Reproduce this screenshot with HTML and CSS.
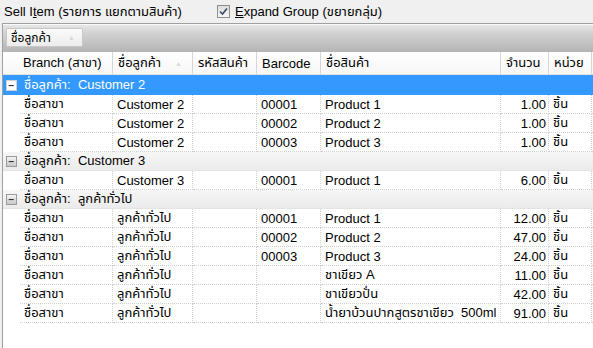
FILE: index.html
```html
<!DOCTYPE html>
<html>
<head>
<meta charset="utf-8">
<link rel="stylesheet" href="styles.css">
</head>
<body>
<div class="topbar">
  <span class="title">Sell I<u>t</u>em (รายการ แยกตามสินค้า)</span>
  <span class="chk">
    <span class="box"><svg width="9" height="9" viewBox="0 0 9 9"><path d="M1 4.5 L3.5 7 L8 1.5" fill="none" stroke="#3c4a6a" stroke-width="1.6"/></svg></span>
    <span class="chk-label"><u>E</u>xpand Group (ขยายกลุ่ม)</span>
  </span>
</div>
<div class="panel">
  <div class="grouppanel">
    <div class="gbtn">ชื่อลูกค้า<span class="sort">▲</span></div>
  </div>
  <div class="head">
    <div class="hc first">Branch (สาขา)</div>
    <div class="hc">ชื่อลูกค้า<span class="sort">▲</span></div>
    <div class="hc">รหัสสินค้า</div>
    <div class="hc">Barcode</div>
    <div class="hc">ชื่อสินค้า</div>
    <div class="hc">จำนวน</div>
    <div class="hc">หน่วย</div>
    <div class="hc rest"></div>
  </div>

  <div class="grow sel"><span class="exp">−</span><span class="gtext">ชื่อลูกค้า:&nbsp; Customer 2</span></div>
  <div class="row"><div class="ind"></div><div class="c">ชื่อสาขา</div><div class="c">Customer 2</div><div class="c"></div><div class="c">00001</div><div class="c">Product 1</div><div class="c num">1.00</div><div class="c">ชิ้น</div><div class="c last"></div></div>
  <div class="row"><div class="ind"></div><div class="c">ชื่อสาขา</div><div class="c">Customer 2</div><div class="c"></div><div class="c">00002</div><div class="c">Product 2</div><div class="c num">1.00</div><div class="c">ชิ้น</div><div class="c last"></div></div>
  <div class="row"><div class="ind"></div><div class="c">ชื่อสาขา</div><div class="c">Customer 2</div><div class="c"></div><div class="c">00003</div><div class="c">Product 3</div><div class="c num">1.00</div><div class="c">ชิ้น</div><div class="c last"></div></div>

  <div class="grow"><span class="exp">−</span><span class="gtext">ชื่อลูกค้า:&nbsp; Customer 3</span></div>
  <div class="row"><div class="ind"></div><div class="c">ชื่อสาขา</div><div class="c">Customer 3</div><div class="c"></div><div class="c">00001</div><div class="c">Product 1</div><div class="c num">6.00</div><div class="c">ชิ้น</div><div class="c last"></div></div>

  <div class="grow"><span class="exp">−</span><span class="gtext">ชื่อลูกค้า:&nbsp; ลูกค้าทั่วไป</span></div>
  <div class="row"><div class="ind"></div><div class="c">ชื่อสาขา</div><div class="c">ลูกค้าทั่วไป</div><div class="c"></div><div class="c">00001</div><div class="c">Product 1</div><div class="c num">12.00</div><div class="c">ชิ้น</div><div class="c last"></div></div>
  <div class="row"><div class="ind"></div><div class="c">ชื่อสาขา</div><div class="c">ลูกค้าทั่วไป</div><div class="c"></div><div class="c">00002</div><div class="c">Product 2</div><div class="c num">47.00</div><div class="c">ชิ้น</div><div class="c last"></div></div>
  <div class="row"><div class="ind"></div><div class="c">ชื่อสาขา</div><div class="c">ลูกค้าทั่วไป</div><div class="c"></div><div class="c">00003</div><div class="c">Product 3</div><div class="c num">24.00</div><div class="c">ชิ้น</div><div class="c last"></div></div>
  <div class="row"><div class="ind"></div><div class="c">ชื่อสาขา</div><div class="c">ลูกค้าทั่วไป</div><div class="c"></div><div class="c"></div><div class="c">ชาเขียว A</div><div class="c num">11.00</div><div class="c">ชิ้น</div><div class="c last"></div></div>
  <div class="row"><div class="ind"></div><div class="c">ชื่อสาขา</div><div class="c">ลูกค้าทั่วไป</div><div class="c"></div><div class="c"></div><div class="c">ชาเขียวปั่น</div><div class="c num">42.00</div><div class="c">ชิ้น</div><div class="c last"></div></div>
  <div class="row"><div class="ind"></div><div class="c">ชื่อสาขา</div><div class="c">ลูกค้าทั่วไป</div><div class="c"></div><div class="c"></div><div class="c">น้ำยาบ้วนปากสูตรชาเขียว&nbsp; 500ml</div><div class="c num">91.00</div><div class="c">ชิ้น</div><div class="c last"></div></div>
</div>
</body>
</html>
```

FILE: styles.css
```css
html, body {
  margin: 0;
  padding: 0;
  width: 593px;
  height: 348px;
  overflow: hidden;
  background: #f0f0f0;
  font-family: "Liberation Sans", "Noto Sans Thai", Tahoma, sans-serif;
  font-size: 13px;
  color: #000;
}

.topbar {
  height: 23px;
  display: flex;
  align-items: center;
  padding-left: 4px;
  box-sizing: border-box;
  white-space: nowrap;
}
.title {
  flex: 0 0 213px;
}
.chk {
  display: flex;
  align-items: center;
}
.box {
  width: 11px;
  height: 11px;
  border: 1px solid #8e8f8f;
  background: linear-gradient(#dcdcdc, #f6f6f6);
  display: flex;
  align-items: center;
  justify-content: center;
  margin-right: 5px;
}
.box svg { display: block; }

.panel {
  height: 325px;
  margin-left: 2px;
  border-left: 1px solid #a0a0a0;
  border-top: 1px solid #a0a0a0;
  background: #fff;
  box-sizing: border-box;
  overflow: hidden;
}

.grouppanel {
  height: 28px;
  background: linear-gradient(#e6e6e6, #d2d2d2 30%, #b4b4b4);
  border-top: 1px solid #fafafa;
  box-sizing: border-box;
  padding: 3px 0 0 3px;
}
.gbtn {
  width: 77px;
  height: 19px;
  box-sizing: border-box;
  background: linear-gradient(#fbfbfb, #ececec);
  border: 1px solid #c8c8c8;
  border-radius: 1px;
  display: flex;
  align-items: center;
  padding-left: 4px;
  position: relative;
  font-size: 12px;
}
.sort {
  font-size: 7px;
  color: #d8d8d8;
  margin-left: auto;
  margin-right: 7px;
}

.head {
  display: grid;
  grid-template-columns: 110px 80px 64px 64px 180px 48px 43px 1fr;
  height: 23px;
  background: #f3f3f3;
}
.hc {
  background: linear-gradient(#ffffff, #f7f7f7);
  border-right: 1px solid #d6d6d6;
  border-bottom: 1px solid #e2e2e2;
  display: flex;
  align-items: center;
  padding-left: 5px;
  white-space: nowrap;
  overflow: hidden;
}
.hc.first { padding-left: 20px; }
.hc .sort { margin-right: 10px; }
.hc.rest { border-right: none; }

.grow {
  height: 19px;
  display: flex;
  align-items: center;
  background: linear-gradient(#f6f6f6, #ebebeb);
  border-bottom: 1px solid #e4e4e4;
  box-sizing: border-box;
  white-space: nowrap;
}
.grow.sel {
  height: 20px;
  background: #3399ff;
  color: #fff;
  border-bottom: none;
}
.exp {
  width: 9px;
  height: 9px;
  margin-left: 3px;
  margin-right: 7px;
  border: 1px solid #9a9a9a;
  background: linear-gradient(#f4f4f4, #c8c8c8);
  color: #333;
  font-size: 10px;
  line-height: 9px;
  text-align: center;
  font-weight: bold;
}
.grow.sel .exp {
  background: #fff;
  color: #333;
  border-color: #d0d0d0;
}

.row {
  display: grid;
  grid-template-columns: 17px 93px 80px 64px 64px 180px 48px 43px 1fr;
  height: 19px;
}
.ind { background: #fff; }
.c {
  border-right: 1px dotted #d0d0d0;
  border-bottom: 1px dotted #d0d0d0;
  padding-left: 4px;
  display: flex;
  align-items: center;
  white-space: nowrap;
  overflow: hidden;
}
.c.num {
  justify-content: flex-end;
  padding-left: 0;
  padding-right: 2px;
}
.c.last { border-right: none; }
```
